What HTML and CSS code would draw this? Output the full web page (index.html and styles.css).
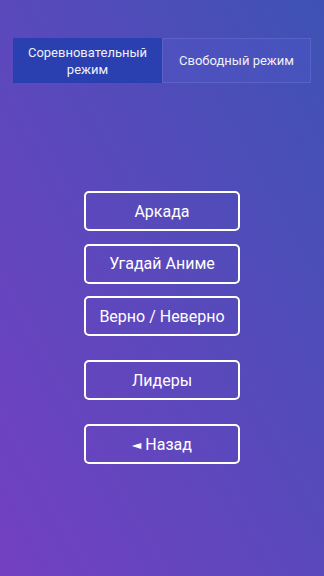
FILE: index.html
```html
<!DOCTYPE html>
<html>
<head>
    <title>Режимы</title>
    <link rel="stylesheet" href="styles.css">
</head>
<body>
    <div class="screen">
        <div class="tabs">
            <div class="tab active">Соревновательный режим</div>
            <div class="tab">Свободный режим</div>
        </div>

        <div class="menu">
            <button class="btn">Аркада</button>
            <button class="btn">Угадай Аниме</button>
            <button class="btn">Верно / Неверно</button>
            <button class="btn gap">Лидеры</button>
            <button class="btn gap"><span class="arrow">◄</span> Назад</button>
        </div>
    </div>
</body>
</html>
```

FILE: styles.css
```css
html, body {
    margin: 0;
    padding: 0;
    height: 100%;
}
body {
    font-family: Roboto, "Noto Sans", sans-serif;
    background: linear-gradient(to top right, #7340c2 0%, #5a49bc 50%, #3e52b4 100%);
    color: white;
}
.screen {
    height: 576px;
    padding: 38px 13px 0 13px;
    box-sizing: border-box;
}
.tabs {
    display: flex;
    height: 45px;
}
.tab {
    flex: 1;
    display: flex;
    align-items: center;
    justify-content: center;
    text-align: center;
    font-size: 13px;
    line-height: 17px;
    padding: 0 12px;
    background: rgba(80, 90, 200, 0.35);
    border: 1px solid rgba(120, 130, 220, 0.35);
    color: #eef0fa;
}
.tab.active {
    background: #2a3fb0;
    border-color: #2a3fb0;
}
.menu {
    display: flex;
    flex-direction: column;
    align-items: center;
    margin-top: 108px;
}
.btn {
    width: 156px;
    height: 40px;
    margin-bottom: 12.5px;
    background: transparent;
    border: 2px solid white;
    border-radius: 5px;
    color: white;
    font-family: Roboto, "Noto Sans", sans-serif;
    font-size: 16px;
    padding: 0;
}
.btn.gap {
    margin-top: 11.5px;
}
.arrow {
    font-family: "DejaVu Sans", sans-serif;
    font-size: 12px;
    vertical-align: 1px;
}
```
